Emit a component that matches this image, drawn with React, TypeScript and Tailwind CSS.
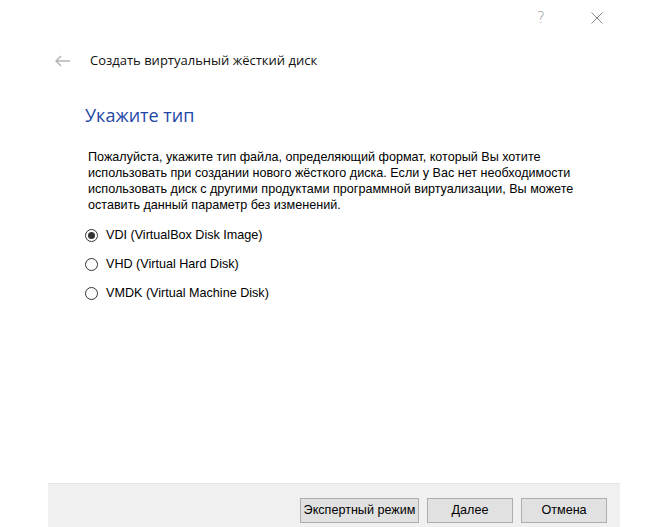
import * as React from 'react';

const options = [
  { id: 'vdi', label: 'VDI (VirtualBox Disk Image)' },
  { id: 'vhd', label: 'VHD (Virtual Hard Disk)' },
  { id: 'vmdk', label: 'VMDK (Virtual Machine Disk)' },
];

const Radio = ({ checked }: { checked: boolean }) => (
  <span className="flex h-[13px] w-[13px] items-center justify-center rounded-full border border-[#333333] bg-white">
    {checked && <span className="h-[7px] w-[7px] rounded-full bg-[#333333]" />}
  </span>
);

export default function App() {
  const [format, setFormat] = React.useState('vdi');

  return (
    <div className="flex h-[527px] w-[649px] flex-col bg-white font-['Liberation_Sans',sans-serif] text-black">
      {/* title bar */}
      <div className="flex h-[36px] items-center justify-end pr-[46px] text-[#9a9a9a]">
        <span className="mr-[46px] text-[15px] font-['DejaVu_Sans',sans-serif] font-light">?</span>
        <svg width="12" height="12" viewBox="0 0 12 12" className="stroke-[#8a8a8a]">
          <path d="M0.5 0.5 L11.5 11.5 M11.5 0.5 L0.5 11.5" strokeWidth="1" fill="none" />
        </svg>
      </div>

      {/* wizard header */}
      <div className="mt-[15px] flex items-center pl-[55px]">
        <svg width="16" height="12" viewBox="0 0 16 12" className="stroke-[#b5b5b5]">
          <path d="M1 6 H15 M6 1 L1 6 L6 11" strokeWidth="1.5" fill="none" />
        </svg>
        <span className="ml-[19px] font-['Open_Sans',sans-serif] text-[13px] text-[#111]">
          Создать виртуальный жёсткий диск
        </span>
      </div>

      {/* content */}
      <div className="mt-[31px] pl-[85px] pr-[40px]">
        <h1 className="font-['Open_Sans',sans-serif] text-[18px] leading-[26px] text-[#1e47a6]">
          Укажите тип
        </h1>
        <p className="mt-[21px] ml-[3px] w-[500px] text-[12.6px] leading-[16px]">
          Пожалуйста, укажите тип файла, определяющий формат, который Вы хотите использовать при
          создании нового жёсткого диска. Если у Вас нет необходимости использовать диск с другими
          продуктами программной виртуализации, Вы можете оставить данный параметр без изменений.
        </p>
        <div className="mt-[16px] flex flex-col gap-[15px]">
          {options.map((o) => (
            <label
              key={o.id}
              className="flex h-[14px] cursor-default items-center"
              onClick={() => setFormat(o.id)}
            >
              <Radio checked={format === o.id} />
              <span className="ml-[8px] text-[12.6px]">{o.label}</span>
            </label>
          ))}
        </div>
      </div>

      {/* footer */}
      <div className="mt-auto ml-[48px] flex h-[44px] w-[572px] items-start justify-end gap-[8px] border-t border-[#e4e4e4] bg-[#f0f0f0] pt-[14px] pr-[13px]">
        <button className="h-[25px] w-[119px] border border-[#adadad] bg-[#e1e1e1] text-[12.6px]">
          Экспертный режим
        </button>
        <button className="h-[25px] w-[86px] border border-[#adadad] bg-[#e1e1e1] text-[12.6px]">
          Далее
        </button>
        <button className="h-[25px] w-[86px] border border-[#adadad] bg-[#e1e1e1] text-[12.6px]">
          Отмена
        </button>
      </div>
    </div>
  );
}
